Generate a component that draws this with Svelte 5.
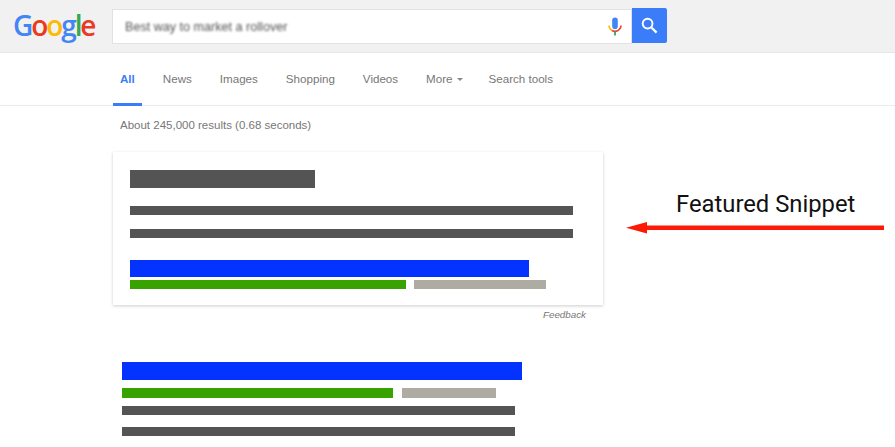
<script>
  const tabs = ['News', 'Images', 'Shopping', 'Videos'];
  const logo = [
    ['G', '#4285f4'],
    ['o', '#ea3a1f'],
    ['o', '#fbbc05'],
    ['g', '#4285f4'],
    ['l', '#34a853'],
    ['e', '#ea3a1f']
  ];
</script>

<div class="page">
  <header class="topbar">
    <div class="logo">
      {#each logo as [letter, color]}
        <span style="color: {color}">{letter}</span>
      {/each}
    </div>
    <div class="search">
      <div class="box">
        <span class="query">Best way to market a rollover</span>
        <svg class="mic" width="14" height="20" viewBox="0 0 14 20">
          <rect x="4.2" y="0.5" width="5.6" height="11.5" rx="2.8" fill="#4285f4" />
          <path d="M1 8.5a6 6 0 0 0 3 5" fill="none" stroke="#fbbc05" stroke-width="1.6" />
          <path d="M4 13.5a6 6 0 0 0 6 0" fill="none" stroke="#ea4335" stroke-width="1.6" />
          <path d="M10 13.5a6 6 0 0 0 3-5" fill="none" stroke="#ea4335" stroke-width="1.6" />
          <rect x="6.1" y="14.5" width="1.8" height="4" fill="#34a853" />
        </svg>
      </div>
      <button class="go" aria-label="Search">
        <svg width="17" height="17" viewBox="0 0 17 17">
          <circle cx="6.6" cy="6.6" r="4.9" fill="none" stroke="#fff" stroke-width="1.9" />
          <path d="M10.2 10.2l5.4 5.4" stroke="#fff" stroke-width="2.2" />
        </svg>
      </button>
    </div>
  </header>

  <nav class="tabs">
    <span class="tab active">All</span>
    {#each tabs as tab}
      <span class="tab">{tab}</span>
    {/each}
    <span class="tab more">More<i class="caret"></i></span>
    <span class="tab">Search tools</span>
  </nav>

  <main class="results">
    <p class="stats">About 245,000 results (0.68 seconds)</p>

    <section class="card">
      <div class="bar dark heading"></div>
      <div class="bar dark line first"></div>
      <div class="bar dark line second"></div>
      <div class="bar blue link"></div>
      <div class="url">
        <div class="bar green"></div>
        <div class="bar gray"></div>
      </div>
    </section>
    <p class="feedback">Feedback</p>

    <section class="result">
      <div class="bar blue link"></div>
      <div class="url">
        <div class="bar green"></div>
        <div class="bar gray"></div>
      </div>
      <div class="bar dark line first"></div>
      <div class="bar dark line second"></div>
    </section>
  </main>

  <div class="note">Featured Snippet</div>
  <svg class="arrow" width="260" height="14" viewBox="0 0 260 14">
    <path d="M0 6.75L21 1V4.5H258V9H21V12.5Z" fill="#fc1a06" />
  </svg>
</div>

<style>
  :global(body) {
    margin: 0;
    background: #fff;
  }

  .page {
    position: relative;
    width: 895px;
    height: 447px;
    overflow: hidden;
    font-family: "Liberation Sans", Arial, sans-serif;
  }

  .topbar {
    box-sizing: border-box;
    height: 53px;
    display: flex;
    align-items: flex-start;
    background: #f1f1f1;
    border-bottom: 1px solid #e6e6e6;
  }

  .logo {
    width: 112px;
    padding: 5px 0 0 13px;
    box-sizing: border-box;
    font-family: "Open Sans", sans-serif;
    font-size: 28px;
    font-weight: 600;
    line-height: 40px;
    letter-spacing: -2.1px;
    white-space: nowrap;
  }

  .search {
    display: flex;
    margin-top: 8px;
  }

  .box {
    box-sizing: border-box;
    width: 520px;
    height: 35px;
    margin-top: 1px;
    padding: 0 9px 0 12px;
    display: flex;
    align-items: center;
    justify-content: space-between;
    background: #fff;
    border: 1px solid #e2e2e2;
  }

  .query {
    font-size: 12.6px;
    color: #555;
    filter: blur(0.9px);
  }

  .mic {
    margin-top: 1px;
  }

  .go {
    width: 35px;
    height: 35px;
    padding: 0;
    border: none;
    border-radius: 0 2px 2px 0;
    background: #3b7df8;
    display: flex;
    align-items: center;
    justify-content: center;
  }

  .tabs {
    box-sizing: border-box;
    height: 53px;
    padding-left: 113px;
    display: flex;
    align-items: flex-start;
    border-bottom: 1px solid #ececec;
    font-size: 11.6px;
    color: #777;
  }

  .tab {
    padding: 18px 7px 0;
    margin-right: 14px;
    height: 34px;
    line-height: 15px;
  }

  .tab.active {
    height: 32px;
    color: #3b7df8;
    font-weight: 700;
    border-bottom: 3px solid #3b7df8;
  }

  .more {
    margin-right: 12px;
  }

  .caret {
    display: inline-block;
    margin: 0 0 2px 4px;
    border: 3.5px solid transparent;
    border-top-color: #888;
    border-bottom: none;
  }

  .results {
    padding-left: 113px;
  }

  .stats {
    margin: 0;
    padding: 12px 0 0 7px;
    font-size: 11.5px;
    line-height: 15px;
    color: #777;
  }

  .card {
    box-sizing: border-box;
    width: 490px;
    height: 153px;
    margin-top: 19px;
    padding: 18px 0 0 17px;
    background: #fff;
    box-shadow: 0 1px 3px rgba(0, 0, 0, 0.2);
  }

  .bar {
    height: 9px;
  }

  .dark {
    background: #545454;
  }

  .blue {
    background: #0433ff;
  }

  .green {
    background: #38a300;
  }

  .gray {
    background: #adaba2;
  }

  .heading {
    width: 185px;
    height: 18px;
  }

  .card .line {
    width: 443px;
    margin-top: 18px;
  }

  .card .second {
    margin-top: 14px;
  }

  .link {
    height: 17px;
  }

  .url {
    display: flex;
  }

  .card .link {
    width: 399px;
    margin-top: 22px;
  }

  .card .url {
    margin-top: 3px;
    gap: 8px;
  }

  .card .green {
    width: 276px;
  }

  .card .gray {
    width: 132px;
  }

  .feedback {
    width: 473px;
    margin: 3px 0 0;
    text-align: right;
    font-size: 9.8px;
    line-height: 13px;
    font-style: italic;
    color: #777;
  }

  .result {
    margin: 41px 0 0 9px;
  }

  .result .link {
    width: 400px;
    height: 18px;
  }

  .result .url {
    margin-top: 8px;
    gap: 9px;
  }

  .result .green {
    width: 271px;
    height: 10px;
  }

  .result .gray {
    width: 94px;
    height: 10px;
  }

  .result .line {
    width: 393px;
    margin-top: 8px;
  }

  .result .second {
    margin-top: 12px;
  }

  /* annotation sits on top of the page */
  .note {
    position: absolute;
    left: 676px;
    top: 190px;
    font-family: Roboto, sans-serif;
    font-size: 23.8px;
    line-height: 28px;
    color: #111;
  }

  .arrow {
    position: absolute;
    left: 626px;
    top: 221px;
  }
</style>
